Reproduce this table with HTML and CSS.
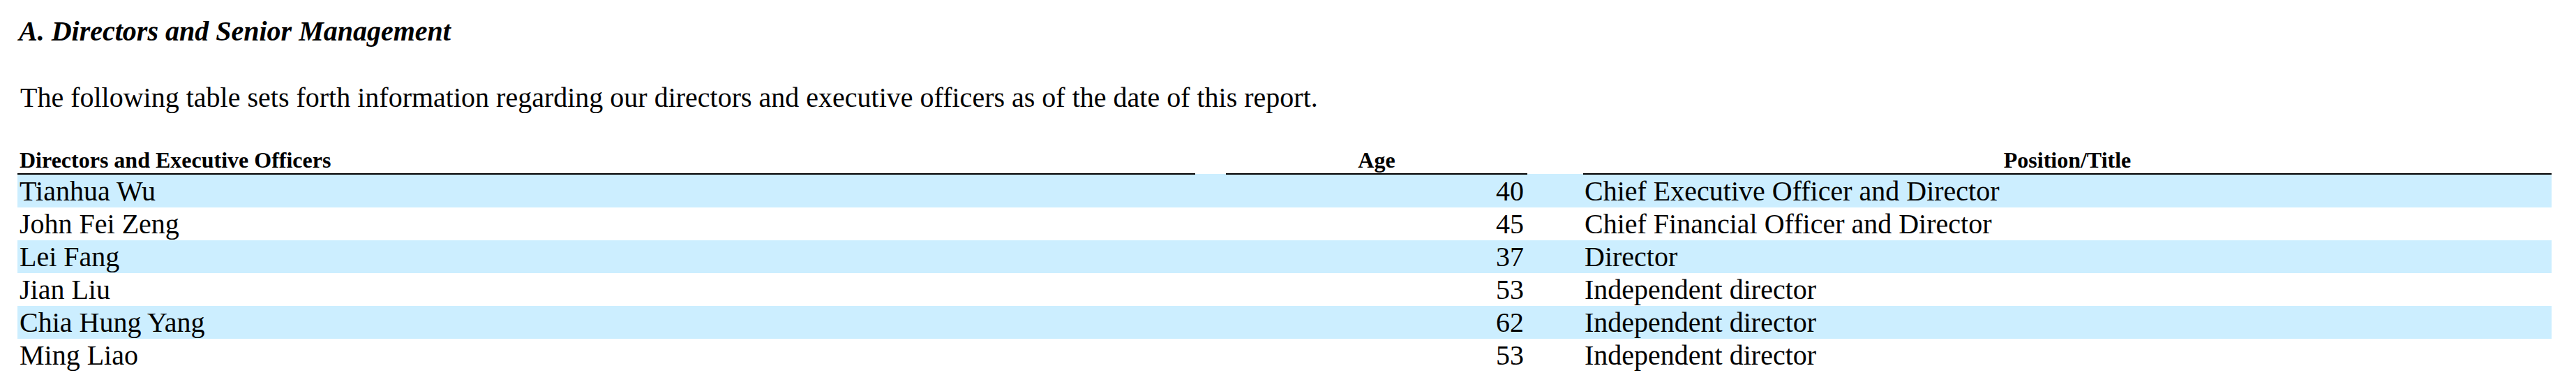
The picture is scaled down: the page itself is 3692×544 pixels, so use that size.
FILE: index.html
```html
<!DOCTYPE html>
<html lang="en">
<head>
<meta charset="utf-8">
<title>Directors and Senior Management</title>
<link rel="stylesheet" href="styles.css">
</head>
<body>
<div class="doc">
  <h2 class="section-title">A. Directors and Senior Management</h2>
  <p class="intro">The following table sets forth information regarding our directors and executive officers as of the date of this report.</p>
  <table class="officers">
    <colgroup>
      <col class="c-name">
      <col class="c-gap1">
      <col class="c-age">
      <col class="c-gap2">
      <col class="c-pos">
    </colgroup>
    <thead>
      <tr>
        <th class="h-name">Directors and Executive Officers</th>
        <th class="spacer"></th>
        <th class="h-age">Age</th>
        <th class="spacer"></th>
        <th class="h-pos">Position/Title</th>
      </tr>
    </thead>
    <tbody>
      <tr class="shade"><td class="name">Tianhua Wu</td><td></td><td class="age">40</td><td></td><td class="pos">Chief Executive Officer and Director</td></tr>
      <tr><td class="name">John Fei Zeng</td><td></td><td class="age">45</td><td></td><td class="pos">Chief Financial Officer and Director</td></tr>
      <tr class="shade"><td class="name">Lei Fang</td><td></td><td class="age">37</td><td></td><td class="pos">Director</td></tr>
      <tr><td class="name">Jian Liu</td><td></td><td class="age">53</td><td></td><td class="pos">Independent director</td></tr>
      <tr class="shade"><td class="name">Chia Hung Yang</td><td></td><td class="age">62</td><td></td><td class="pos">Independent director</td></tr>
      <tr><td class="name">Ming Liao</td><td></td><td class="age">53</td><td></td><td class="pos">Independent director</td></tr>
    </tbody>
  </table>
</div>
</body>
</html>
```
FILE: styles.css
```css
html, body {
  margin: 0;
  padding: 0;
  background: #ffffff;
}

body {
  font-family: "Liberation Serif", "Times New Roman", serif;
  color: #000000;
  overflow: hidden;
}

.doc {
  padding: 22px 35px 0 25px;
}

.section-title {
  margin: 0 0 49px 2px;
  font-size: 40px;
  line-height: 46px;
  font-weight: bold;
  font-style: italic;
}

.intro {
  margin: 0 0 48px 4px;
  font-size: 40px;
  line-height: 46px;
}

.officers {
  width: 3632px;
  table-layout: fixed;
  border-collapse: collapse;
  border-spacing: 0;
}

.c-name { width: 1688px; }
.c-gap1 { width: 44px; }
.c-age  { width: 432px; }
.c-gap2 { width: 80px; }
.c-pos  { width: 1388px; }

.officers th {
  font-size: 32px;
  line-height: 37px;
  font-weight: bold;
  padding: 0 3px;
  vertical-align: bottom;
  border-bottom: 2px solid #000000;
}

.officers th.spacer {
  border-bottom: none;
  padding: 0;
}

.h-name { text-align: left; }
.h-age,
.h-pos { text-align: center; }

.officers td {
  font-size: 40px;
  line-height: 47px;
  padding: 0;
  white-space: nowrap;
}

.officers tr.shade td {
  background: #cceeff;
}

.officers td.name {
  padding-left: 3px;
}

.officers td.age {
  text-align: right;
  padding-right: 5px;
}

.officers td.pos {
  padding-left: 2px;
}
```
